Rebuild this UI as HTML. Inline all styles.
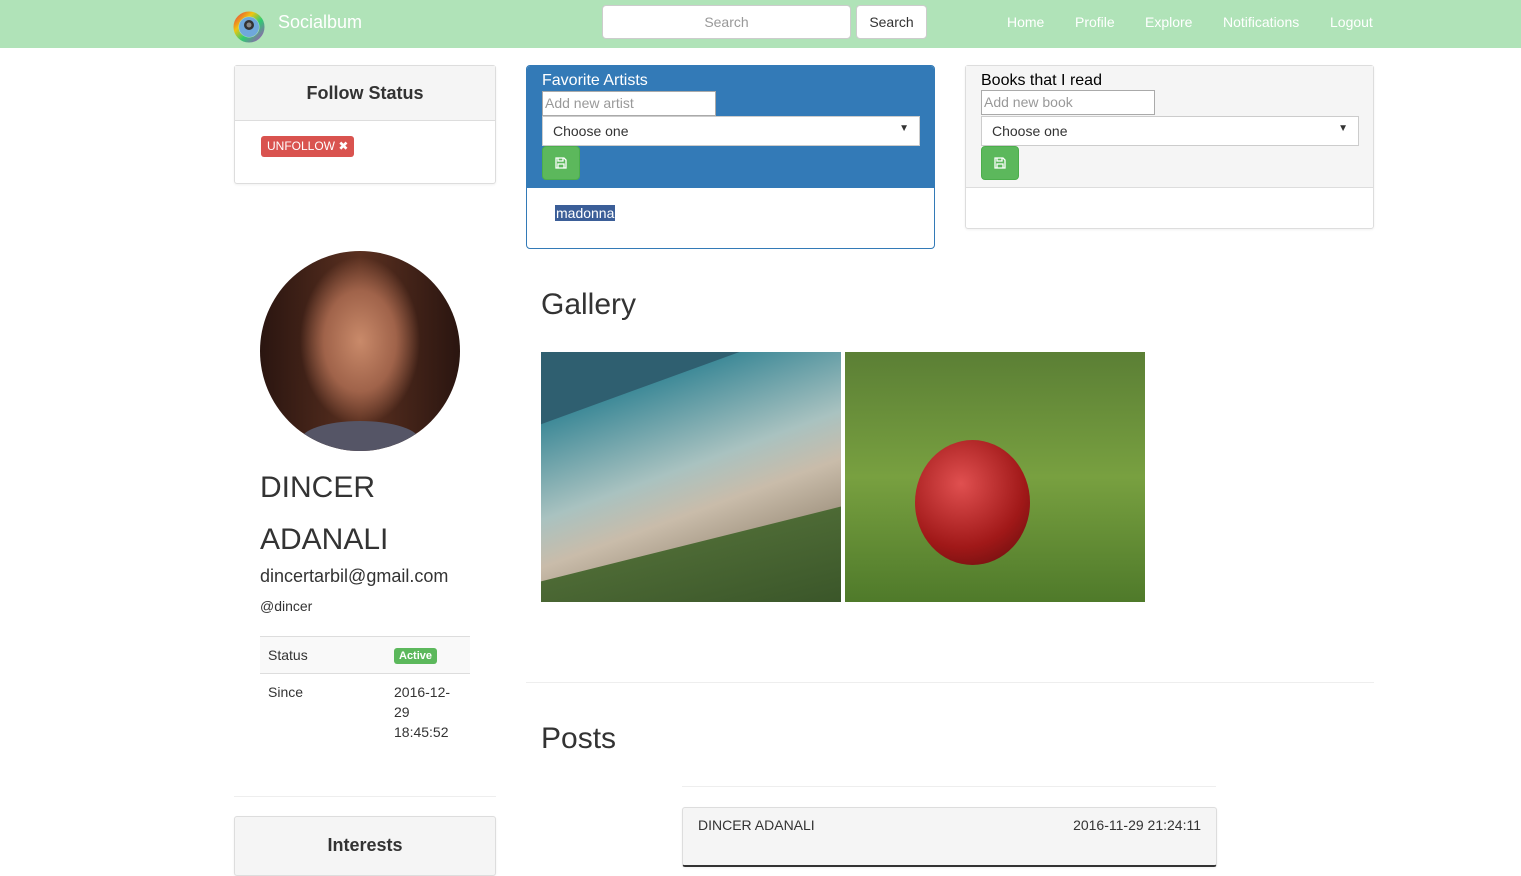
<!DOCTYPE html>
<html><head><meta charset="utf-8"><style>
*{box-sizing:border-box}
body{margin:0;font-family:"Liberation Sans",sans-serif;color:#333;background:#fff;width:1521px;height:854px;overflow:hidden;position:relative;font-size:14px}
.abs{position:absolute}
.nav{left:0;top:0;width:1521px;height:48px;background:#b0e3b8}
.nav a{position:absolute;top:14px;color:#fff;font-size:14px}
.panel{border:1px solid #ddd;border-radius:3px;box-shadow:0 1px 2px rgba(0,0,0,.06)}
.sel{background:#fff;border:1px solid #ccc;height:30px;font-size:14px;padding:6px 10px;color:#333}
.btn-g{background:#5cb85c;border:1px solid #4cae4c;border-radius:4px;width:38px;height:34px}
</style></head><body>
<div class="abs nav">
  <svg class="abs" style="left:233px;top:11px" width="32" height="32" viewBox="0 0 32 32"><circle cx="16" cy="16" r="13" fill="none" stroke="url(#rb)" stroke-width="5"/><defs><linearGradient id="rb" x1="0" x2="1" y1="0" y2="1"><stop offset="0" stop-color="#e74c3c"/><stop offset=".3" stop-color="#f1c40f"/><stop offset=".6" stop-color="#2ecc71"/><stop offset="1" stop-color="#9b59b6"/></linearGradient></defs><circle cx="16" cy="16" r="10" fill="#6fa8dc"/><circle cx="16" cy="14" r="5" fill="#333"/><circle cx="16" cy="14" r="2.5" fill="#888"/></svg>
  <div class="abs" style="left:278px;top:12px;color:#fff;font-size:18px">Socialbum</div>
  <div class="abs" style="left:602px;top:5px;width:249px;height:34px;background:#fff;border:1px solid #ccc;border-radius:4px;text-align:center;line-height:32px;color:#999">Search</div>
  <div class="abs" style="left:856px;top:5px;width:71px;height:34px;background:#fff;border:1px solid #ccc;border-radius:4px;text-align:center;line-height:32px;color:#333">Search</div>
  <a style="left:1007px">Home</a><a style="left:1075px">Profile</a><a style="left:1145px">Explore</a><a style="left:1223px">Notifications</a><a style="left:1330px">Logout</a>
</div>

<div class="abs panel" style="left:234px;top:65px;width:262px;height:119px">
  <div style="background:#f5f5f5;height:55px;border-bottom:1px solid #ddd;text-align:center;line-height:55px;font-size:18px;font-weight:bold">Follow Status</div>
  <div class="abs" style="left:26px;top:70px;background:#d9534f;color:#fff;font-size:12px;padding:3px 6px;border-radius:3px;line-height:15px">UNFOLLOW ✖</div>
</div>

<div class="abs" style="left:526px;top:65px;width:409px;height:184px;border:1px solid #337ab7;border-radius:4px;overflow:hidden">
  <div style="background:#337ab7;height:122px;position:relative">
    <div class="abs" style="left:15px;top:6px;color:#fff;font-size:16px">Favorite Artists</div>
    <div class="abs" style="left:15px;top:25px;width:174px;height:25px;background:#fff;border:1px solid #aaa;color:#999;padding:3px 2px">Add new artist</div>
    <div class="abs sel" style="left:15px;top:50px;width:378px">Choose one<span style="float:right;font-size:10px">▼</span></div>
    <div class="abs btn-g" style="left:15px;top:80px"><svg style="margin:10px 0 0 12px" width="12" height="12" viewBox="0 0 12 12"><path d="M1 1h8l2 2v8H1z M3 1v3h5V1 M3 7h6v4H3z" fill="none" stroke="#fff" stroke-width="1.3"/></svg></div>
  </div>
  <div class="abs" style="left:28px;top:139px;background:#3b5e98;color:#fff;padding:0 1px;font-size:14px">madonna</div>
</div>

<div class="abs panel" style="left:965px;top:65px;width:409px;height:164px">
  <div style="background:#f5f5f5;height:122px;border-bottom:1px solid #ddd;position:relative">
    <div class="abs" style="left:15px;top:6px;color:#000;font-size:16px">Books that I read</div>
    <div class="abs" style="left:15px;top:24px;width:174px;height:25px;background:#fff;border:1px solid #aaa;color:#999;padding:3px 2px">Add new book</div>
    <div class="abs sel" style="left:15px;top:50px;width:378px">Choose one<span style="float:right;font-size:10px">▼</span></div>
    <div class="abs btn-g" style="left:15px;top:80px"><svg style="margin:10px 0 0 12px" width="12" height="12" viewBox="0 0 12 12"><path d="M1 1h8l2 2v8H1z M3 1v3h5V1 M3 7h6v4H3z" fill="none" stroke="#fff" stroke-width="1.3"/></svg></div>
  </div>
</div>

<div class="abs" style="left:260px;top:251px;width:200px;height:200px;border-radius:50%;background:radial-gradient(ellipse 30% 42% at 50% 45%,#c98a6a 0,#a0634a 60%,transparent 100%),linear-gradient(90deg,#2a1510,#5a3020 50%,#2a1510);overflow:hidden"><div class="abs" style="left:40px;top:170px;width:120px;height:40px;background:#556;border-radius:50% 50% 0 0"></div></div>
<div class="abs" style="left:260px;top:462px;font-size:30px;line-height:52px">DINCER<br>ADANALI</div>
<div class="abs" style="left:260px;top:566px;font-size:18px">dincertarbil@gmail.com</div>
<div class="abs" style="left:260px;top:598px;font-size:14px">@dincer</div>
<div class="abs" style="left:260px;top:636px;width:210px;height:38px;background:#f9f9f9;border-top:1px solid #ddd;border-bottom:1px solid #ddd"></div>
<div class="abs" style="left:268px;top:647px">Status</div>
<div class="abs" style="left:394px;top:648px;background:#5cb85c;color:#fff;font-size:11px;font-weight:bold;padding:2px 5px;border-radius:3px">Active</div>
<div class="abs" style="left:268px;top:684px">Since</div>
<div class="abs" style="left:394px;top:682px;line-height:20px">2016-12-<br>29<br>18:45:52</div>
<div class="abs" style="left:234px;top:796px;width:262px;height:1px;background:#eee"></div>
<div class="abs panel" style="left:234px;top:816px;width:262px;height:60px;background:#f5f5f5;text-align:center;padding-top:18px;font-size:18px;font-weight:bold">Interests</div>

<div class="abs" style="left:541px;top:288px;font-size:30px">Gallery</div>
<div class="abs" style="left:541px;top:352px;width:300px;height:250px;overflow:hidden;background:#2f5f70">
  <div class="abs" style="left:-60px;top:20px;width:460px;height:300px;background:linear-gradient(180deg,#3f8a98,#a9c2c0 30%,#c9bcaa 45%,#a89b88 60%);transform:rotate(-20deg)"></div>
  <div class="abs" style="left:-60px;top:190px;width:460px;height:200px;background:linear-gradient(180deg,#4d6a35,#253f1c);transform:rotate(-14deg)"></div>
</div>
<div class="abs" style="left:845px;top:352px;width:300px;height:250px;background:linear-gradient(180deg,#5b7f35,#78a040 50%,#4f7a2a)">
  <div class="abs" style="left:70px;top:88px;width:115px;height:125px;border-radius:50%;background:radial-gradient(circle at 40% 35%,#e05050,#a01818 60%,#5a0c0c)"></div>
</div>
<div class="abs" style="left:526px;top:682px;width:848px;height:1px;background:#eee"></div>
<div class="abs" style="left:541px;top:722px;font-size:30px">Posts</div>
<div class="abs" style="left:682px;top:786px;width:534px;height:1px;background:#eee"></div>
<div class="abs panel" style="left:682px;top:807px;width:535px;height:60px;background:#f5f5f5;border-bottom:2px solid #333">
  <div class="abs" style="left:15px;top:9px">DINCER ADANALI</div>
  <div class="abs" style="right:15px;top:9px">2016-11-29 21:24:11</div>
</div>
</body></html>
